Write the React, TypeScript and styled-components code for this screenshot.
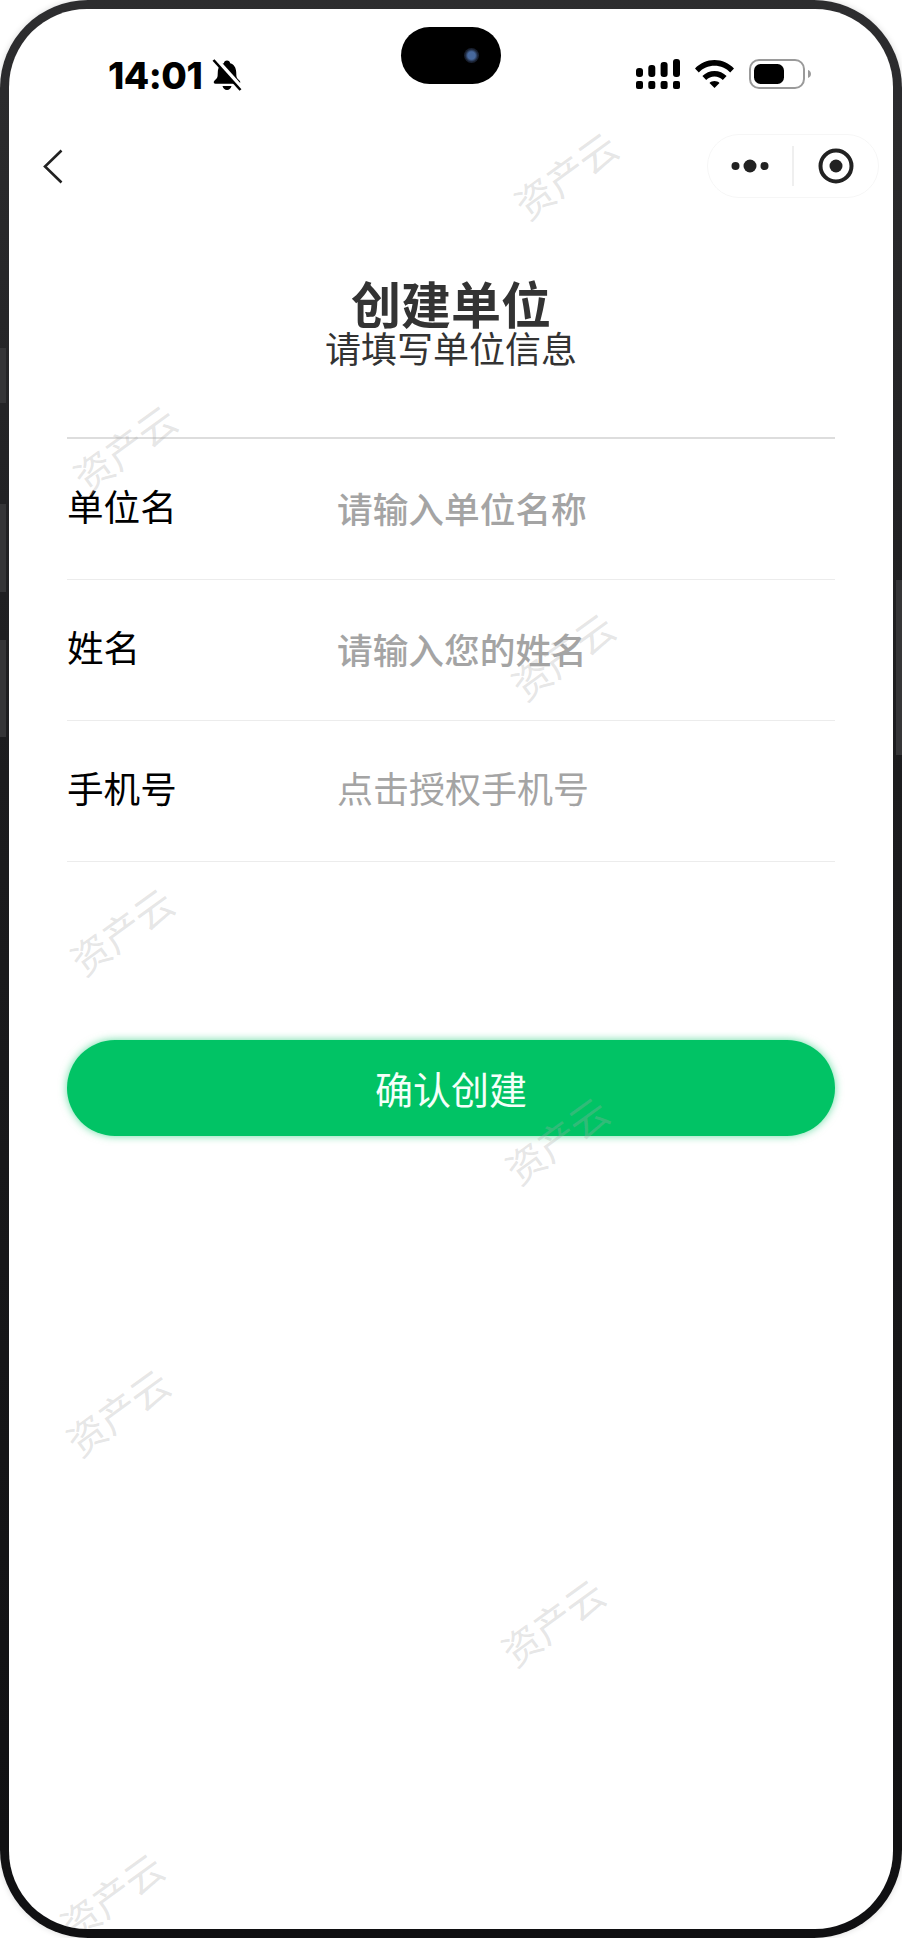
import styled, { createGlobalStyle } from "styled-components";

const GlobalStyle = createGlobalStyle`
  html, body {
    margin: 0;
    padding: 0;
    background: #fff;
  }
  * {
    box-sizing: border-box;
  }
`;

const FONT = `"Noto Sans CJK SC", "Noto Sans", sans-serif`;

const Page = styled.div`
  width: 902px;
  height: 1938px;
  overflow: hidden;
  background: #fff;
  font-family: ${FONT};
`;

const Phone = styled.div`
  position: relative;
  height: 100%;
  padding: 9px;
  border-radius: 88px;
  background: linear-gradient(180deg, #2d2d2f 0%, #1c1c1e 40%, #101012 100%);
  box-shadow: 0 0 6px rgba(0, 0, 0, 0.15);
`;

const SideKey = styled.div<{ $right?: boolean; $top: number; $height: number }>`
  position: absolute;
  ${(p) => (p.$right ? "right: 0;" : "left: 0;")}
  top: ${(p) => p.$top}px;
  width: 6px;
  height: ${(p) => p.$height}px;
  background: #353537;
`;

const Screen = styled.div`
  position: relative;
  height: 100%;
  overflow: hidden;
  border-radius: 78px;
  background: #fff;
`;

const StatusBar = styled.div`
  height: 125px;
  padding: 18px 0 0 99px;
  display: grid;
  grid-template-columns: 293px 100px 1fr;
  align-items: start;
`;

const StatusLeft = styled.div`
  margin-top: 32px;
  display: flex;
  align-items: center;
  gap: 10px;
`;

const Time = styled.span`
  font-family: Inter, sans-serif;
  font-size: 37px;
  line-height: 31px;
  font-weight: 800;
  letter-spacing: -0.5px;
  color: #000;
`;

const Island = styled.div`
  height: 57px;
  border-radius: 29px;
  background: #000;
  display: flex;
  align-items: center;
  justify-content: center;
  padding-left: 40px;
`;

const Camera = styled.div`
  width: 15px;
  height: 15px;
  border-radius: 50%;
  background: radial-gradient(circle, #47689c 0 35%, #1a2233 60%, #10141e 100%);
`;

const StatusRight = styled.div`
  margin-top: 32px;
  padding-left: 135px;
  display: flex;
  align-items: center;
  gap: 15px;
`;

const Nav = styled.div`
  height: 64px;
  padding: 0 14px 0 34px;
  display: flex;
  align-items: center;
  justify-content: space-between;
`;

const Capsule = styled.div`
  width: 172px;
  height: 64px;
  border: 1.5px solid #f6f6f6;
  border-radius: 32px;
  display: flex;
  align-items: center;
`;

const CapsuleSide = styled.div`
  flex: 1;
  display: flex;
  align-items: center;
  justify-content: center;
`;

const CapsuleDivider = styled.div`
  width: 1.5px;
  height: 40px;
  background: #efefef;
`;

const Heading = styled.div`
  margin-top: 80px;
  display: flex;
  flex-direction: column;
  align-items: center;
`;

const Title = styled.h1`
  margin: 0;
  font-size: 50px;
  line-height: 48px;
  font-weight: 700;
  color: #333;
`;

const Subtitle = styled.p`
  margin: 2px 0 0;
  font-size: 36px;
  line-height: 38px;
  font-weight: 400;
  color: #333;
`;

const Form = styled.div`
  margin: 71px 58px 0;
  border-top: 2px solid #ddd;
`;

const Row = styled.div`
  height: 141px;
  padding-bottom: 3px;
  display: flex;
  align-items: center;
  border-bottom: 1.5px solid #ececec;
`;

const Label = styled.label`
  width: 270px;
  flex: none;
  margin-bottom: 3px;
  font-size: 36.6px;
  line-height: 50px;
  color: #000;
`;

const Field = styled.input`
  flex: 1;
  min-width: 0;
  padding: 0;
  border: 0;
  outline: 0;
  background: transparent;
  font-family: ${FONT};
  font-size: 35.7px;
  font-weight: 500;
  &::placeholder {
    color: #a4a4a4;
    opacity: 1;
  }
`;

const AuthHint = styled.span`
  margin-bottom: 6px;
  font-size: 36px;
  line-height: 50px;
  font-weight: 400;
  color: #a4a4a4;
`;

const Submit = styled.button`
  display: block;
  width: 768px;
  height: 96px;
  margin: 178px 58px 0;
  padding: 0 0 2px;
  border: 0;
  border-radius: 48px;
  background: #01c365;
  box-shadow: 0 0 8px rgba(0, 196, 101, 0.6);
  font-family: ${FONT};
  font-size: 38px;
  font-weight: 400;
  color: #f4fff9;
`;

const Watermark = styled.span<{ $x: number; $y: number }>`
  position: absolute;
  left: ${(p) => p.$x - 9}px;
  top: ${(p) => p.$y - 9}px;
  transform: translate(-50%, -50%) rotate(-36deg);
  font-size: 38.5px;
  line-height: 1;
  font-weight: 400;
  white-space: nowrap;
  color: rgba(170, 170, 170, 0.3);
  pointer-events: none;
`;

const MARKS = [
  [565, 174],
  [124, 447],
  [562, 655],
  [121, 930],
  [556, 1139],
  [117, 1411],
  [552, 1621],
  [111, 1895],
];

const KEYS = [
  { top: 348, height: 55 },
  { top: 504, height: 88 },
  { top: 640, height: 97 },
  { top: 580, height: 175, right: true },
];

const BellOff = () => (
  <svg width="30" height="32" viewBox="0 0 30 32">
    <path
      d="M15 1.500c1.800 0 3 1.200 3.200 2.700 4.200 1.300 5.800 4.800 6 8.800l.2 4c.1 1.800 1.500 3.200 3.200 4.700 1.300 1.100.6 3-1.100 3H3.500c-1.700 0-2.400-1.900-1.100-3 1.700-1.500 3.100-2.900 3.200-4.700l.2-4c.2-4 1.800-7.500 6-8.800C12 2.700 13.200 1.500 15 1.500z"
      fill="#000"
    />
    <path d="M10.500 27h9c-.4 2.200-2.200 4-4.500 4s-4.100-1.800-4.500-4z" fill="#000" />
    <path d="M3.500 0 30.500 30" stroke="#fff" strokeWidth="4.600" />
    <path d="M1.500 1 28.500 31" stroke="#000" strokeWidth="2.600" />
  </svg>
);

const Signal = () => (
  <svg width="44" height="30" viewBox="0 0 44 30" fill="#000">
    <rect x="0" y="9" width="7" height="9" rx="3" />
    <rect x="12.3" y="6" width="7" height="12" rx="3" />
    <rect x="24.6" y="3" width="7" height="15" rx="3" />
    <rect x="37" y="0" width="7" height="18" rx="3" />
    <rect x="0" y="22" width="7" height="8" rx="2" />
    <rect x="12.3" y="22" width="7" height="8" rx="2" />
    <rect x="24.6" y="22" width="7" height="8" rx="2" />
    <rect x="37" y="22" width="7" height="8" rx="2" />
  </svg>
);

const Wifi = () => (
  <svg width="39" height="28" viewBox="0 0 39 28" fill="#000">
    <path d="M0 8.4C5 3.2 12 0 19.5 0S34 3.2 39 8.4l-3.8 4C31.2 8.3 25.6 5.8 19.5 5.8S7.8 8.3 3.8 12.4z" />
    <path d="M7.4 16C10.6 12.9 14.9 11 19.5 11s8.9 1.9 12.1 5l-3.8 4c-2.2-2.1-5.1-3.4-8.3-3.4s-6.1 1.3-8.3 3.4z" />
    <path d="M14.5 23c1.3-1.2 3.1-1.9 5-1.9s3.7.7 5 1.9l-5 5z" />
  </svg>
);

const Battery = () => (
  <svg width="62" height="30" viewBox="0 0 62 30">
    <rect x="1" y="1" width="54" height="28" rx="9" fill="none" stroke="#9a9a9a" strokeWidth="2" />
    <rect x="5" y="5" width="30" height="20" rx="6.5" fill="#000" />
    <path d="M59 11c1.8.6 3 2.2 3 4s-1.2 3.4-3 4z" fill="#9a9a9a" />
  </svg>
);

const Back = () => (
  <svg width="20" height="35" viewBox="0 0 20 35" fill="none">
    <path d="M18.5 1.5 2 17.5 18.5 33.5" stroke="#222" strokeWidth="2.6" />
  </svg>
);

const Dots = () => (
  <svg width="38" height="14" viewBox="0 0 38 14" fill="#222">
    <circle cx="4.5" cy="7" r="4" />
    <circle cx="19" cy="7" r="6.5" />
    <circle cx="33.5" cy="7" r="4" />
  </svg>
);

const Target = () => (
  <svg width="36" height="36" viewBox="0 0 36 36" fill="none">
    <circle cx="18" cy="18" r="15.5" stroke="#222" strokeWidth="4" />
    <circle cx="18" cy="18" r="6.5" fill="#222" />
  </svg>
);

export default function App() {
  return (
    <Page>
      <GlobalStyle />
      <Phone>
        {KEYS.map((k) => (
          <SideKey key={k.top} $top={k.top} $height={k.height} $right={k.right} />
        ))}
        <Screen>
          <StatusBar>
            <StatusLeft>
              <Time>14:01</Time>
              <BellOff />
            </StatusLeft>
            <Island>
              <Camera />
            </Island>
            <StatusRight>
              <Signal />
              <Wifi />
              <Battery />
            </StatusRight>
          </StatusBar>
          <Nav>
            <Back />
            <Capsule>
              <CapsuleSide>
                <Dots />
              </CapsuleSide>
              <CapsuleDivider />
              <CapsuleSide>
                <Target />
              </CapsuleSide>
            </Capsule>
          </Nav>
          <Heading>
            <Title>创建单位</Title>
            <Subtitle>请填写单位信息</Subtitle>
          </Heading>
          <Form>
            <Row>
              <Label>单位名</Label>
              <Field placeholder="请输入单位名称" />
            </Row>
            <Row>
              <Label>姓名</Label>
              <Field placeholder="请输入您的姓名" />
            </Row>
            <Row>
              <Label>手机号</Label>
              <AuthHint>点击授权手机号</AuthHint>
            </Row>
          </Form>
          <Submit>确认创建</Submit>
          {MARKS.map(([x, y]) => (
            <Watermark key={y} $x={x} $y={y}>
              资产云
            </Watermark>
          ))}
        </Screen>
      </Phone>
    </Page>
  );
}
